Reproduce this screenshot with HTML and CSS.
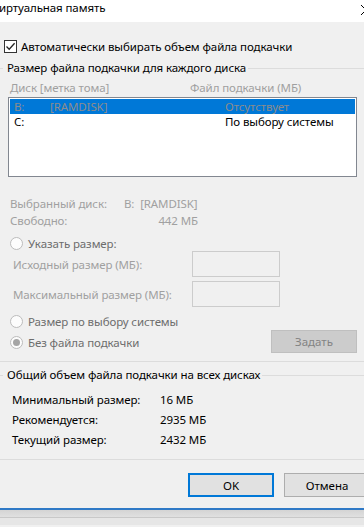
FILE: index.html
```html
<!DOCTYPE html>
<html lang="ru">
<head>
  <meta charset="UTF-8" />
  <meta name="viewport" content="width=device-width, initial-scale=1.0" />
  <title>Виртуальная память</title>
  <link rel="stylesheet" href="styles.css">
</head>
<body>
  <div class="titlebar">
    <span class="title">иртуальная память</span>
    <svg class="close" width="10" height="10" viewBox="0 0 10 10"><path d="M0 0 L10 10 M10 0 L0 10" stroke="#000" stroke-width="1" fill="none"/></svg>
  </div>

  <div class="check-row">
    <span class="checkbox">
      <svg width="11" height="11" viewBox="0 0 11 11"><path d="M1.5 5.5 L4.2 8.3 L9.6 2.2" stroke="#222" stroke-width="1.3" fill="none"/></svg>
    </span>
    <span>Автоматически выбирать объем файла подкачки</span>
  </div>

  <div class="group">
    <div class="group-head">Размер файла подкачки для каждого диска</div>

    <div class="list-head">
      <span>Диск [метка тома]</span>
      <span>Файл подкачки (МБ)</span>
    </div>
    <div class="listbox">
      <div class="list-row selected">
        <span>B:</span><span>[RAMDISK]</span><span>Отсутствует</span>
      </div>
      <div class="list-row">
        <span>C:</span><span></span><span>По выбору системы</span>
      </div>
    </div>

    <div class="info">
      <span>Выбранный диск:</span><span class="val">B:&nbsp; [RAMDISK]</span>
      <span>Свободно:</span><span class="val right">442 МБ</span>
    </div>

    <div class="radio-row first">
      <span class="radio"></span>
      <span>Указать размер:</span>
    </div>
    <div class="size-row">
      <span class="size-label">Исходный размер (МБ):</span>
      <span class="textbox"></span>
    </div>
    <div class="size-row">
      <span class="size-label">Максимальный размер (МБ):</span>
      <span class="textbox"></span>
    </div>

    <div class="bottom-row">
      <div class="radios">
        <div class="radio-row">
          <span class="radio"></span>
          <span>Размер по выбору системы</span>
        </div>
        <div class="radio-row">
          <span class="radio checked"></span>
          <span>Без файла подкачки</span>
        </div>
      </div>
      <button class="btn-set">Задать</button>
    </div>
  </div>

  <div class="group total">
    <div class="group-head">Общий объем файла подкачки на всех дисках</div>
    <div class="totals">
      <span>Минимальный размер:</span><span>16 МБ</span>
      <span>Рекомендуется:</span><span>2935 МБ</span>
      <span>Текущий размер:</span><span>2432 МБ</span>
    </div>
  </div>

  <div class="buttons">
    <button class="btn default">OK</button>
    <button class="btn">Отмена</button>
  </div>

  <div class="taskbar"></div>
</body>
</html>
```

FILE: styles.css
```css
body {
  margin: 0;
  width: 364px;
  height: 527px;
  overflow: hidden;
  background: #f0f0f0;
  font-family: "Noto Sans", "Open Sans", sans-serif;
  font-size: 11.5px;
  letter-spacing: -0.1px;
  color: #000;
}
.titlebar {
  height: 22px;
  background: #fff;
  display: flex;
  justify-content: space-between;
  align-items: flex-start;
  line-height: 16px;
}
.title {
  margin-left: -1px;
}
.close {
  margin-top: 5px;
  margin-right: -7px;
}
.check-row {
  display: flex;
  align-items: center;
  gap: 4px;
  height: 16px;
  margin-top: 16px;
  padding-left: 4px;
}
.checkbox {
  width: 11px;
  height: 11px;
  border: 1px solid #333;
  background: #fff;
  display: flex;
}
.group {
  margin-top: 6px;
  padding-bottom: 8px;
  border-bottom: 1px solid #dcdcdc;
}
.group-head {
  display: flex;
  align-items: center;
  height: 16px;
  line-height: 16px;
}
.group-head::before {
  content: "";
  width: 3px;
  margin-right: 4px;
  border-top: 1px solid #dcdcdc;
}
.group-head::after {
  content: "";
  flex: 1;
  margin-left: 2px;
  border-top: 1px solid #dcdcdc;
}
.list-head {
  display: grid;
  grid-template-columns: 180px 1fr;
  padding-left: 10px;
  margin-top: 4px;
  height: 16px;
  line-height: 16px;
  color: #a0a0a0;
}
.listbox {
  margin: 1px 7px 0 8px;
  padding: 1px;
  border: 1px solid #828790;
  box-sizing: border-box;
  height: 80px;
  background: #fff;
}
.list-row {
  display: grid;
  grid-template-columns: 36px 175px 1fr;
  padding-left: 4px;
  height: 15px;
  line-height: 15px;
}
.list-row.selected {
  background: #0078d7;
  color: #8c8c8c;
}
.info {
  display: grid;
  grid-template-columns: 114px 74px;
  grid-auto-rows: 17px;
  align-items: center;
  padding-left: 10px;
  margin-top: 18px;
  color: #a0a0a0;
  white-space: nowrap;
}
.info .right {
  text-align: right;
}
.radio-row {
  display: flex;
  align-items: center;
  gap: 5px;
  height: 21px;
  padding-left: 10px;
  color: #6d6d6d;
}
.radio-row.first {
  height: 15px;
  margin-top: 7px;
}
.radio {
  width: 11px;
  height: 11px;
  border: 1px solid #bcbcbc;
  border-radius: 50%;
  background: #fcfcfc;
  display: flex;
  align-items: center;
  justify-content: center;
}
.radio.checked::after {
  content: "";
  width: 7px;
  height: 7px;
  border-radius: 50%;
  background: #a5a5a5;
}
.size-row {
  display: flex;
  align-items: center;
  height: 26px;
  margin-bottom: 4px;
  color: #a0a0a0;
}
.size-label {
  width: 179px;
  padding-left: 13px;
}
.textbox {
  width: 86px;
  height: 24px;
  border: 1px solid #cccccc;
  background: #f0f0f0;
}
.bottom-row {
  display: flex;
  justify-content: space-between;
  align-items: flex-end;
  padding-right: 7px;
  margin-top: 2px;
}
.btn-set {
  width: 86px;
  height: 23px;
  border: 1px solid #bfbfbf;
  background: #cccccc;
  color: #838383;
  font: inherit;
  padding: 0;
}
.total {
  margin-top: 5px;
  padding-bottom: 10px;
}
.totals {
  display: grid;
  grid-template-columns: 148px 1fr;
  grid-auto-rows: 20px;
  align-items: center;
  padding-left: 12px;
  margin-top: 6px;
}
.buttons {
  display: flex;
  justify-content: flex-end;
  gap: 10px;
  margin-top: 13px;
  margin-right: -6px;
}
.btn {
  width: 86px;
  height: 24px;
  border: 1px solid #adadad;
  background: #e1e1e1;
  font: inherit;
  color: #000;
  padding: 0;
}
.btn.default {
  border: 2px solid #0078d7;
}
.taskbar {
  margin-top: 11px;
  height: 15px;
  border-top: 2px solid #2f79c6;
  background: linear-gradient(#d4d4d4, #e0e0e0 7px, #c8c8c8 7px, #c8c8c8 8px, #e6e6e6 8px);
}
```
